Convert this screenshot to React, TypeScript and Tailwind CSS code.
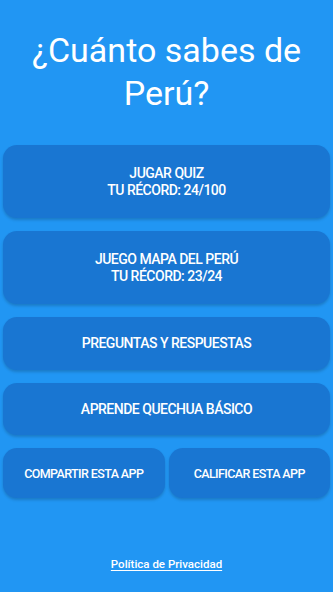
import type { ReactNode } from "react";

function MenuButton({ children, className = "" }: { children: ReactNode; className?: string }) {
    return (
        <button
            className={`flex flex-col items-center justify-center rounded-[14px] bg-[#1976d2] font-medium uppercase leading-[17px] text-white shadow-[0_2px_3px_rgba(0,0,0,0.18)] ${className}`}
        >
            {children}
        </button>
    );
}

export default function App() {
    return (
        <div
            className="flex min-h-[592px] w-full flex-col bg-[#2196f3] px-[3px]"
            style={{ fontFamily: "Roboto, 'Noto Sans', sans-serif" }}
        >
            {/* Title */}
            <h1 className="mt-[29px] px-4 text-center text-[34px] font-normal leading-[43px] text-white">
                ¿Cuánto sabes de Perú?
            </h1>

            {/* Menu */}
            <div className="mt-[30px] flex flex-col gap-[13px] text-[14px] tracking-[-0.5px]">
                <MenuButton className="h-[73px]">
                    <span>Jugar quiz</span>
                    <span>Tu récord: 24/100</span>
                </MenuButton>
                <MenuButton className="h-[73px]">
                    <span>Juego mapa del Perú</span>
                    <span>Tu récord: 23/24</span>
                </MenuButton>
                <MenuButton className="h-[53px]">Preguntas y respuestas</MenuButton>
                <MenuButton className="h-[52px]">Aprende quechua básico</MenuButton>
                <div className="flex gap-[4px] text-[12.5px] tracking-[-0.6px]">
                    <MenuButton className="h-[50px] flex-1">Compartir esta app</MenuButton>
                    <MenuButton className="h-[50px] flex-1">Calificar esta app</MenuButton>
                </div>
            </div>

            {/* Footer */}
            <div className="mt-[53px] text-center">
                <a className="text-[11.5px] font-medium text-white underline underline-offset-2">
                    Política de Privacidad
                </a>
            </div>
        </div>
    );
}
